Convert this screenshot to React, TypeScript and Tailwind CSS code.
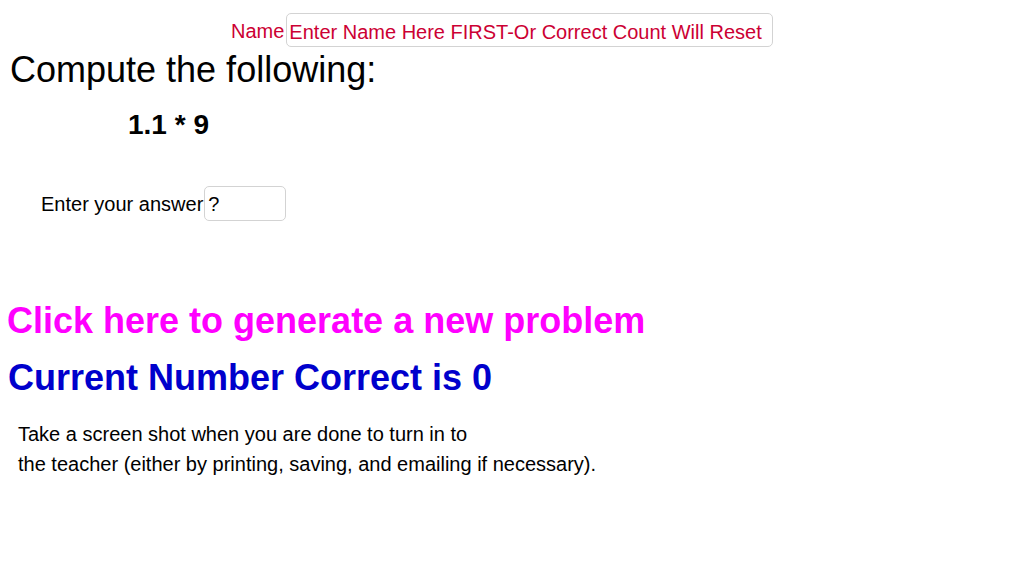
const font = { fontFamily: '"Liberation Sans", Arial, sans-serif' };

export default function App() {
  return (
    <main className="w-[1024px] h-[564px] bg-white overflow-hidden text-black" style={font}>
      <div className="flex items-start pt-[13px] pl-[231px]">
        <span className="pt-[4px] text-[20px] leading-[29px] text-[#cc0033]">Name</span>
        <input
          defaultValue="Enter Name Here FIRST-Or Correct Count Will Reset"
          className="ml-[2px] w-[487px] h-[34px] pt-[4px] px-[2px] border border-[#d3d3d3] rounded-[5px] text-[20px] text-[#cc0033] outline-none"
          style={font}
        />
      </div>

      <h1 className="mt-[5px] pl-[10px] text-[36px] leading-[36px] font-normal">Compute the following:</h1>

      <p className="mt-[23px] pl-[128px] text-[28px] leading-[28px] font-bold">1.1 * 9</p>

      <div className="flex items-start mt-[47px] pl-[41px]">
        <span className="pt-[2px] text-[20px] leading-[32px]">Enter your answer</span>
        <input
          defaultValue="?"
          className="ml-[1px] w-[82px] h-[35px] pt-[2px] px-[3px] border border-[#d3d3d3] rounded-[5px] text-[20px] outline-none"
          style={font}
        />
      </div>

      <button className="block mt-[82px] pl-[7px] text-[36px] leading-[36px] font-bold text-[#ff00ff] cursor-pointer" style={font}>
        Click here to generate a new problem
      </button>

      <p className="mt-[21px] pl-[8px] text-[36px] leading-[36px] font-bold text-[#0000cc]">Current Number Correct is 0</p>

      <p className="mt-[23px] pl-[18px] text-[20px] leading-[30px]">
        Take a screen shot when you are done to turn in to
        <br />
        the teacher (either by printing, saving, and emailing if necessary).
      </p>
    </main>
  );
}
